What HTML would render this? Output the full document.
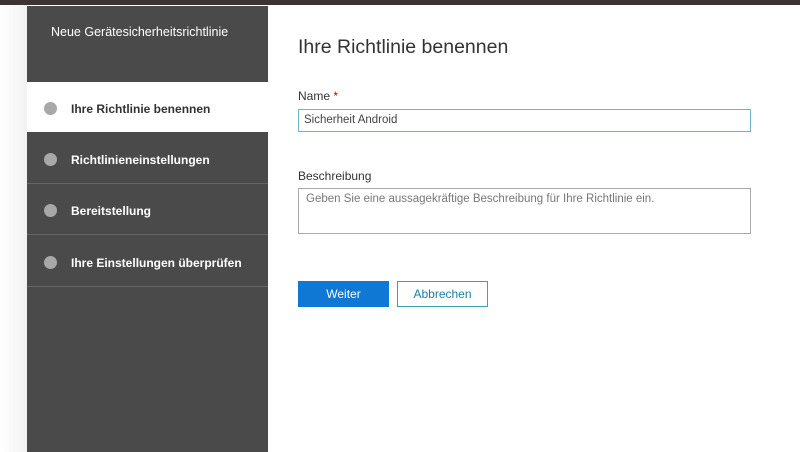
<!DOCTYPE html>
<html><head><meta charset="utf-8"><style>
*{margin:0;padding:0;box-sizing:border-box}
body{width:800px;height:452px;overflow:hidden;background:#fff;font-family:"Liberation Sans",sans-serif;position:relative}
.top{position:absolute;left:0;top:0;width:800px;height:5px;background:#3a3532}
.lm{position:absolute;left:0;top:5px;width:27px;height:447px;background:linear-gradient(to right,#fff,#f2f2f2)}
.side{position:absolute;left:27px;top:6px;width:241px;height:446px;background:#4a4a4a}
.hd{position:absolute;left:24px;top:19px;color:#fff;font-size:12.5px}
.item{position:absolute;left:0;width:241px;height:51px;border-bottom:1px solid #666;color:#fff;font-size:12px;font-weight:bold}
.item .dot{position:absolute;left:17px;top:20px;width:13px;height:13px;border-radius:50%;background:#a8a8a8}
.item span{position:absolute;left:44px;top:20px}
.act{background:#fff;color:#333;border-bottom:none}
.title{position:absolute;left:298px;top:36px;font-size:19.5px;color:#333}
.lbl{position:absolute;left:298px;font-size:12px;color:#333}
.in{position:absolute;left:298px;width:453px;border:1px solid #aaa;font-size:11.5px;color:#444;padding:6px 5px}
.btn{position:absolute;top:281px;height:26px;font-size:12px;text-align:center;line-height:26px}
</style></head><body>
<div class="top"></div><div class="lm"></div>
<div class="side">
<div class="hd">Neue Gerätesicherheitsrichtlinie</div>
<div class="item act" style="top:76px;height:50px"><div class="dot"></div><span>Ihre Richtlinie benennen</span></div>
<div class="item" style="top:127px"><div class="dot"></div><span>Richtlinieneinstellungen</span></div>
<div class="item" style="top:178px"><div class="dot"></div><span>Bereitstellung</span></div>
<div class="item" style="top:230px"><div class="dot"></div><span>Ihre Einstellungen überprüfen</span></div>
</div>
<div class="title">Ihre Richtlinie benennen</div>
<div class="lbl" style="top:89px">Name <span style="color:#c00">*</span></div>
<div class="in" style="top:109px;height:23px;border-color:#6bb5c5;padding:0 5px;line-height:21px">Sicherheit Android</div>
<div class="lbl" style="top:169px">Beschreibung</div>
<div class="in" style="top:188px;height:46px;color:#777;padding:4px 7px">Geben Sie eine aussagekräftige Beschreibung für Ihre Richtlinie ein.</div>
<div class="btn" style="left:298px;width:91px;background:#0f78d4;color:#fff">Weiter</div>
<div class="btn" style="left:397px;width:91px;border:1px solid #3aa0b5;color:#1a7fa0;line-height:24px">Abbrechen</div>
</body></html>
